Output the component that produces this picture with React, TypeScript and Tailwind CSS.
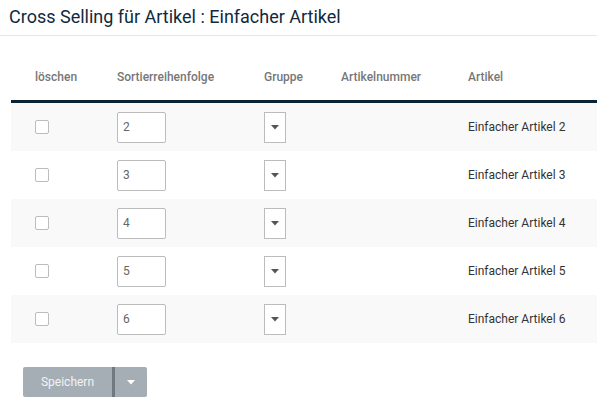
import React from 'react';

function Caret({ color = '#555' }: { color?: string }) {
  return (
    <svg width="8" height="5" viewBox="0 0 8 5">
      <path d="M0 0 L8 0 L4 4.5 Z" fill={color} />
    </svg>
  );
}

export default function App() {
  const rows = [2, 3, 4, 5, 6];
  const grid = 'grid grid-cols-[106px_147px_77px_127px_1fr] items-center';

  return (
    <div className="w-[597px] h-[408px] bg-white overflow-hidden font-['Roboto',sans-serif]">
      <div className="h-[36px] border-b border-[#e6e6e6] pl-[9px] flex items-center">
        <h1 className="text-[18px] text-[#0f2a40] leading-none pb-[2px]">Cross Selling für Artikel : Einfacher Artikel</h1>
      </div>

      <div className="ml-[11px] mt-[14px]">
        <div className={`${grid} h-[53px] pt-[3px] text-[12px] font-medium text-[#777] border-b-[3px] border-[#0b2335]`}>
          <div className="pl-[24px]">löschen</div>
          <div>Sortierreihenfolge</div>
          <div>Gruppe</div>
          <div>Artikelnummer</div>
          <div>Artikel</div>
        </div>

        {rows.map((n, i) => (
          <div key={n} className={`${grid} h-[48px] text-[12px] ${i % 2 === 0 ? 'bg-[#f9f9f9]' : 'bg-white'}`}>
            <div className="pl-[24px]">
              <div className="w-[14px] h-[14px] rounded-[2px] border border-[#bcbcbc] bg-white" />
            </div>
            <div>
              <div className="w-[49px] h-[31px] border border-[#bcbcbc] rounded-[2px] bg-white flex items-center pl-[5px] text-[#666]">
                {n}
              </div>
            </div>
            <div>
              <div className="w-[22px] h-[31px] border border-[#bcbcbc] bg-white flex items-center justify-center">
                <Caret />
              </div>
            </div>
            <div></div>
            <div className="text-[#333]">Einfacher Artikel {n}</div>
          </div>
        ))}
      </div>

      <div className="ml-[23px] mt-[24px] flex h-[30px] w-[124px] rounded-[2px] overflow-hidden">
        <button className="w-[89px] bg-[#a5aeb5] text-[12px] text-[#f1f3f5]">Speichern</button>
        <div className="w-[3px] bg-[#6e7980]" />
        <button className="flex-1 bg-[#a5aeb5] flex items-center justify-center">
          <Caret color="#fff" />
        </button>
      </div>
    </div>
  );
}
